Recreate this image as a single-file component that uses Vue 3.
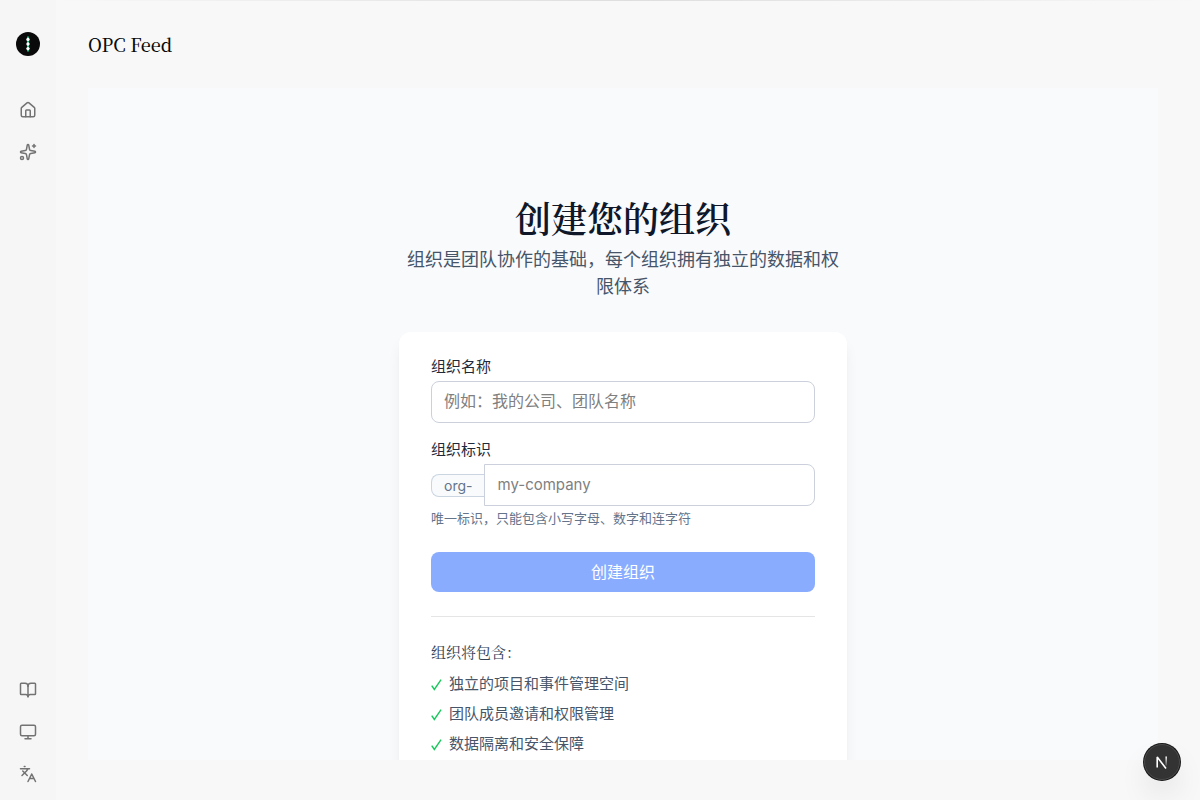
<script setup>
import { ref } from 'vue'

const name = ref('')
const slug = ref('')
const features = ['独立的项目和事件管理空间', '团队成员邀请和权限管理', '数据隔离和安全保障']
</script>

<template>
  <div class="shell">
    <aside class="rail">
      <a href="#" class="logo" aria-label="OPC Feed">
        <svg width="24" height="24" viewBox="0 0 24 24">
          <circle cx="12" cy="12" r="12" fill="#0a0a0a" />
          <path d="M12 4.5v15" stroke="#10b981" stroke-width="2" />
          <g fill="#fff">
            <circle cx="12" cy="7.4" r="1.7" />
            <circle cx="12" cy="12" r="1.7" />
            <circle cx="12" cy="16.6" r="1.7" />
          </g>
        </svg>
      </a>
      <nav class="group">
        <a href="#" aria-label="首页">
          <svg class="icon" viewBox="0 0 24 24">
            <path d="M15 21v-8a1 1 0 0 0-1-1h-4a1 1 0 0 0-1 1v8" />
            <path d="M3 10a2 2 0 0 1 .709-1.528l7-5.999a2 2 0 0 1 2.582 0l7 5.999A2 2 0 0 1 21 10v9a2 2 0 0 1-2 2H5a2 2 0 0 1-2-2z" />
          </svg>
        </a>
        <a href="#" aria-label="智能">
          <svg class="icon" viewBox="0 0 24 24">
            <path d="M11.017 2.814a1 1 0 0 1 1.966 0l1.051 5.558a2 2 0 0 0 1.594 1.594l5.558 1.051a1 1 0 0 1 0 1.966l-5.558 1.051a2 2 0 0 0-1.594 1.594l-1.051 5.558a1 1 0 0 1-1.966 0l-1.051-5.558a2 2 0 0 0-1.594-1.594l-5.558-1.051a1 1 0 0 1 0-1.966l5.558-1.051a2 2 0 0 0 1.594-1.594z" />
            <path d="M20 2v4" />
            <path d="M22 4h-4" />
            <circle cx="4" cy="20" r="2" />
          </svg>
        </a>
      </nav>
      <nav class="group bottom">
        <a href="#" aria-label="文档">
          <svg class="icon" viewBox="0 0 24 24">
            <path d="M12 7v14" />
            <path d="M3 18a1 1 0 0 1-1-1V4a1 1 0 0 1 1-1h5a4 4 0 0 1 4 4 4 4 0 0 1 4-4h5a1 1 0 0 1 1 1v13a1 1 0 0 1-1 1h-6a3 3 0 0 0-3 3 3 3 0 0 0-3-3z" />
          </svg>
        </a>
        <button type="button" aria-label="主题">
          <svg class="icon" viewBox="0 0 24 24">
            <rect x="2" y="3" width="20" height="14" rx="2" />
            <path d="M8 21h8M12 17v4" />
          </svg>
        </button>
        <button type="button" aria-label="语言">
          <svg class="icon" viewBox="0 0 24 24">
            <path d="m5 8 6 6M4 14l6-6 2-3M2 5h12M7 2h1M22 22l-5-10-5 10M14 18h6" />
          </svg>
        </button>
      </nav>
    </aside>

    <div class="main">
      <header class="top"><span class="brand">OPC Feed</span></header>
      <main class="panel">
        <div class="column">
          <h1>创建您的组织</h1>
          <p class="lead">组织是团队协作的基础，每个组织拥有独立的数据和权限体系</p>
          <div class="card">
            <form @submit.prevent>
              <div class="field">
                <label for="org-name">组织名称</label>
                <input id="org-name" v-model="name" type="text" placeholder="例如：我的公司、团队名称" />
              </div>
              <div class="field">
                <label for="org-slug">组织标识</label>
                <div class="joined">
                  <span class="prefix">org-</span>
                  <input id="org-slug" v-model="slug" type="text" placeholder="my-company" />
                </div>
                <p class="hint">唯一标识，只能包含小写字母、数字和连字符</p>
              </div>
              <button class="submit" type="submit" disabled>创建组织</button>
            </form>
            <section class="includes">
              <h3>组织将包含：</h3>
              <ul>
                <li v-for="f in features" :key="f">
                  <svg class="check" viewBox="0 0 12 14"><path d="M.8 8.2 3.6 12.4 11 1.6" /></svg>
                  <span>{{ f }}</span>
                </li>
              </ul>
            </section>
          </div>
        </div>
      </main>
    </div>

    <button class="dev" type="button" aria-label="Next.js">
      <svg width="18" height="18" viewBox="0 0 18 18" fill="none">
        <defs>
          <linearGradient id="fade" x1="0" y1="3" x2="0" y2="13" gradientUnits="userSpaceOnUse">
            <stop stop-color="#fff" />
            <stop offset="1" stop-color="#fff" stop-opacity="0.1" />
          </linearGradient>
        </defs>
        <path d="M4.2 14.5V4L13 15.5" stroke="#fff" stroke-width="1.6" stroke-linejoin="bevel" />
        <path d="M13.2 3.4v9.4" stroke="url(#fade)" stroke-width="1.6" />
      </svg>
    </button>
  </div>
</template>

<style>
body {
  margin: 0;
  background: #f7f7f7;
}
</style>

<style scoped>
* {
  box-sizing: border-box;
}
.shell {
  display: flex;
  height: 100vh;
  overflow: hidden;
  background: #f7f7f7;
  font-family: Inter, "Noto Sans CJK SC", sans-serif;
  color: #0a0a0a;
}
.rail {
  flex: none;
  width: 56px;
  padding: 32px 0 8px;
  display: flex;
  flex-direction: column;
  align-items: center;
  background: #f6f6f6;
}
.logo {
  display: block;
  height: 24px;
}
.group {
  display: flex;
  flex-direction: column;
  gap: 6px;
  margin-top: 36px;
}
.group.bottom {
  margin-top: auto;
}
.group a,
.group button {
  display: flex;
  align-items: center;
  justify-content: center;
  width: 36px;
  height: 36px;
  padding: 0;
  border: 0;
  background: none;
  color: #737373;
}
.icon {
  width: 18px;
  height: 18px;
  fill: none;
  stroke: currentColor;
  stroke-width: 2;
  stroke-linecap: round;
  stroke-linejoin: round;
}
.main {
  flex: 1;
  min-width: 0;
  display: flex;
  flex-direction: column;
  padding: 0 42px 40px 32px;
  background: linear-gradient(90deg, transparent, #dedede 50%, transparent) top / 100% 1px no-repeat, #f8f8f8;
}
.top {
  flex: none;
  height: 88px;
  display: flex;
  align-items: center;
}
.brand {
  font-family: "Noto Serif CJK SC", "Noto Serif SC", "Source Serif 4", "Liberation Serif", serif;
  font-size: 18px;
  font-weight: 500;
  line-height: 28px;
}
.panel {
  flex: 1;
  min-height: 0;
  overflow: hidden;
  padding: 108px 16px 0;
  background: #f9fafc;
}
.column {
  max-width: 448px;
  margin: 0 auto;
}
h1 {
  margin: 0 0 6px;
  font-family: "Noto Serif CJK SC", "Noto Serif SC", "Liberation Serif", serif;
  font-size: 36px;
  line-height: 44px;
  font-weight: 600;
  text-align: center;
  color: #0f172a;
}
.lead {
  margin: 0 0 32px;
  font-size: 18px;
  line-height: 27px;
  text-align: center;
  color: #475569;
}
.card {
  padding: 24px 32px 32px;
  border-radius: 12px;
  background: #fff;
  box-shadow: 0 10px 15px -3px rgba(0, 0, 0, 0.08), 0 4px 6px -4px rgba(0, 0, 0, 0.08);
}
.field {
  margin-bottom: 16px;
}
label {
  display: block;
  margin-bottom: 4px;
  font-size: 15px;
  line-height: 21px;
  font-weight: 400;
  color: #1e293b;
}
input {
  display: block;
  width: 100%;
  min-width: 0;
  height: 42px;
  padding: 0 12px 2px;
  border: 1px solid #cbd0dc;
  border-radius: 8px;
  background: #fff;
  font: inherit;
  font-size: 16px;
  color: #0f172a;
}
input::placeholder {
  color: #808080;
  opacity: 1;
}
.joined {
  display: flex;
  align-items: center;
}
.prefix {
  flex: none;
  height: 23px;
  padding: 0 12px;
  border: 1px solid #cbd5e1;
  border-right: 0;
  border-radius: 8px 0 0 8px;
  background: #f8fafc;
  font-size: 14px;
  line-height: 22px;
  color: #64748b;
}
.joined input {
  flex: 1;
  border-radius: 0 8px 8px 0;
  font-size: 15px;
}
.hint {
  margin: 2px 0 0;
  font-size: 13px;
  line-height: 20px;
  color: #64748b;
}
.submit {
  display: block;
  width: 100%;
  height: 40px;
  margin-top: 24px;
  padding: 0 0 2px;
  border: 0;
  border-radius: 8px;
  background: #8aacff;
  font: inherit;
  font-size: 16px;
  color: #fff;
}
.includes {
  margin-top: 24px;
  padding-top: 24px;
  border-top: 1px solid #e5e5e5;
}
h3 {
  margin: 0 0 10px;
  font-family: "Noto Serif CJK SC", "Noto Serif SC", "Noto Sans CJK SC", serif;
  font-size: 15px;
  line-height: 22px;
  font-weight: 400;
  color: #334155;
}
ul {
  display: flex;
  flex-direction: column;
  gap: 8px;
  margin: 0;
  padding: 0;
  list-style: none;
}
li {
  display: flex;
  align-items: center;
  gap: 7px;
  font-size: 15px;
  line-height: 22px;
  color: #475569;
}
.check {
  width: 11px;
  height: 13px;
  fill: none;
  stroke: #16c95a;
  stroke-width: 1.5;
}
.dev {
  position: fixed;
  right: 20px;
  bottom: 20px;
  display: flex;
  align-items: center;
  justify-content: center;
  width: 36px;
  height: 36px;
  padding: 0;
  border: 1px solid #4a4a4a;
  border-radius: 50%;
  background: #333;
  box-shadow: 0 0 0 1px #171717, 0 16px 32px -8px rgba(0, 0, 0, 0.24);
}
</style>
